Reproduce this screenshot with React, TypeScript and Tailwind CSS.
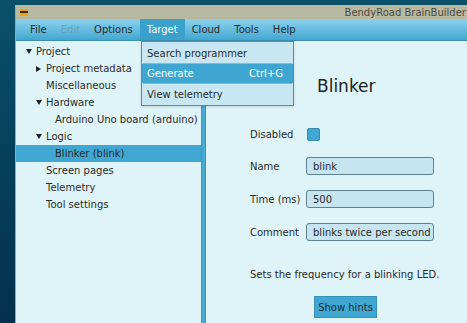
import React from 'react';

const font = { fontFamily: '"DejaVu Sans", Verdana, sans-serif' };

type Row = { label: string; indent: number; arrow?: 'down' | 'right'; selected?: boolean };

const rows: Row[] = [
  { label: 'Project', indent: 0, arrow: 'down' },
  { label: 'Project metadata', indent: 1, arrow: 'right' },
  { label: 'Miscellaneous', indent: 1 },
  { label: 'Hardware', indent: 1, arrow: 'down' },
  { label: 'Arduino Uno board (arduino)', indent: 2 },
  { label: 'Logic', indent: 1, arrow: 'down' },
  { label: 'Blinker (blink)', indent: 2, selected: true },
  { label: 'Screen pages', indent: 1 },
  { label: 'Telemetry', indent: 1 },
  { label: 'Tool settings', indent: 1 },
];

const pad = ['pl-[10px]', 'pl-[20px]', 'pl-[29px]'];

function TreeRow({ row }: { row: Row }) {
  return (
    <div className={`h-[17px] flex items-center ${pad[row.indent]} ${row.selected ? 'bg-[#3fa7d2]' : ''}`}>
      <span className="w-[10px] flex items-center text-[#222]">
        {row.arrow === 'down' && <span className="inline-block w-0 h-0 border-l-[3px] border-r-[3px] border-t-[5px] border-l-transparent border-r-transparent border-t-[#222]" />}
        {row.arrow === 'right' && <span className="inline-block w-0 h-0 border-t-[3px] border-b-[3px] border-l-[5px] border-t-transparent border-b-transparent border-l-[#222]" />}
      </span>
      <span className="text-[10px] text-[#2a2a2a] whitespace-nowrap">{row.label}</span>
    </div>
  );
}

function Field({ label, value }: { label: string; value: string }) {
  return (
    <div className="flex items-center h-[18px]">
      <span className="w-[56px] text-[10px] text-[#2a2a2a] whitespace-nowrap">{label}</span>
      <div className="w-[128px] h-[18px] rounded-[3px] border border-[#60828c] bg-[#c6e5f0] px-[6px] flex items-center text-[10px] text-[#2a2a2a] whitespace-nowrap overflow-hidden">
        {value}
      </div>
    </div>
  );
}

export default function App() {
  const menus = ['File', 'Edit', 'Options', 'Target', 'Cloud', 'Tools', 'Help'];
  return (
    <div style={font} className="w-[467px] h-[323px] overflow-hidden bg-gradient-to-b from-[#0b5069] to-[#03304d] pl-[15px] pt-[5px] flex">
      <div className="flex-1 flex flex-col bg-[#dff4f9] border-l border-[#9aa8ac] relative">
        {/* title bar */}
        <div className="h-[14px] bg-[#b9b9a2] flex items-center justify-between pr-[1px]">
          <div className="ml-[4px] w-[8px] h-[7px] rounded-[1px] bg-[#e8a21a] flex items-center">
            <div className="w-full h-[2px] bg-[#3a2a10]" />
          </div>
          <span className="text-[10px] text-[#4a4a40]">BendyRoad BrainBuilder</span>
        </div>
        {/* menu bar */}
        <div className="h-[22px] bg-gradient-to-b from-[#8ad2ec] to-[#41a7d2] border-b border-[#3d8fb2] flex items-stretch pl-[7px]">
          {menus.map((m) => (
            <div
              key={m}
              className={`px-[7px] flex items-center text-[10px] ${m === 'Edit' ? 'text-[#6aa4bb]' : m === 'Target' ? 'text-white bg-[#3aa1cd]' : 'text-[#2a2a2a]'}`}
            >
              {m}
            </div>
          ))}
        </div>
        {/* body */}
        <div className="flex-1 flex">
          <div className="w-[185px] pt-[2px]">
            {rows.map((r) => (
              <TreeRow key={r.label} row={r} />
            ))}
          </div>
          <div className="w-[5px] bg-[#4aaad2] border-x border-[#3b93bb]" />
          <div className="flex-1 flex flex-col pl-[44px] pt-[37px]">
            <div className="pl-[67px] text-[17px] text-[#222] leading-none h-[18px]">Blinker</div>
            <div className="mt-[32px] flex items-center h-[13px]">
              <span className="w-[57px] text-[10px] text-[#2a2a2a]">Disabled</span>
              <div className="w-[13px] h-[13px] rounded-[2px] bg-[#3fa7d2] border border-[#3a8db3]" />
            </div>
            <div className="mt-[16px] flex flex-col gap-[15px]">
              <Field label="Name" value="blink" />
              <Field label="Time (ms)" value="500" />
              <Field label="Comment" value="blinks twice per second" />
            </div>
            <div className="mt-[26px] text-[10px] text-[#2a2a2a] whitespace-nowrap">Sets the frequency for a blinking LED.</div>
            <div className="mt-[14px] pl-[64px]">
              <div className="w-[63px] h-[22px] bg-[#3fa7d2] border border-[#3890b8] flex items-center justify-center text-[10px] text-[#1f2b30]">
                Show hints
              </div>
            </div>
          </div>
        </div>
        {/* dropdown */}
        <div className="absolute left-[125px] top-[36px] w-[153px] bg-[#c9e7f2] border border-[#5c8a9a] py-[1px] shadow-sm">
          <div className="h-[20px] flex items-center px-[5px] text-[10px] text-[#2a2a2a]">Search programmer</div>
          <div className="h-px bg-[#8fb7c6] mx-[1px]" />
          <div className="h-[19px] flex items-center justify-between px-[5px] text-[10px] text-white bg-[#3ea6d1]">
            <span>Generate</span>
            <span className="mr-[5px]">Ctrl+G</span>
          </div>
          <div className="h-px bg-[#8fb7c6] mx-[1px]" />
          <div className="h-[20px] flex items-center px-[5px] text-[10px] text-[#2a2a2a]">View telemetry</div>
        </div>
      </div>
    </div>
  );
}
